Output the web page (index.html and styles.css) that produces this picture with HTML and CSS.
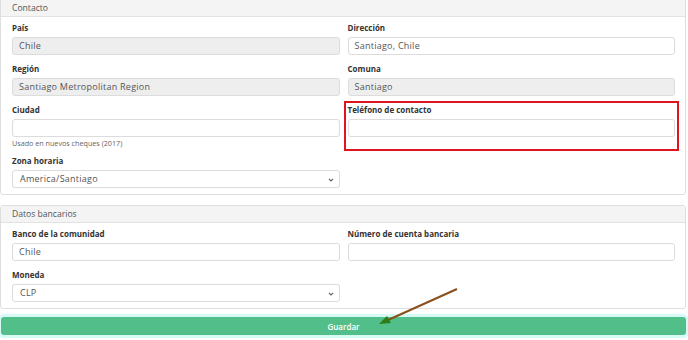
FILE: index.html
```html
<!DOCTYPE html>
<html lang="es">
<head>
<meta charset="utf-8">
<link rel="stylesheet" href="styles.css">
</head>
<body>
<div class="page">
  <section class="card card-top">
    <div class="card-header">Contacto</div>
    <div class="card-body">
      <div class="row">
        <div class="field"><label class="lbl">País</label><div class="inp disabled">Chile</div></div>
        <div class="field"><label class="lbl">Dirección</label><div class="inp">Santiago, Chile</div></div>
      </div>
      <div class="row">
        <div class="field"><label class="lbl">Región</label><div class="inp disabled">Santiago Metropolitan Region</div></div>
        <div class="field"><label class="lbl">Comuna</label><div class="inp disabled">Santiago</div></div>
      </div>
      <div class="row">
        <div class="field"><label class="lbl">Ciudad</label><div class="inp"></div><div class="help">Usado en nuevos cheques (2017)</div></div>
        <div class="field highlight"><label class="lbl">Teléfono de contacto</label><div class="inp"></div><div class="redbox"></div></div>
      </div>
      <div class="row">
        <div class="field"><label class="lbl">Zona horaria</label><div class="inp select">America/Santiago<svg class="chev" width="6" height="4" viewBox="0 0 6 4"><path d="M1 1l2 2 2-2" fill="none" stroke="#666" stroke-width="1.1"/></svg></div></div>
        <div class="field"></div>
      </div>
    </div>
  </section>
  <section class="card">
    <div class="card-header">Datos bancarios</div>
    <div class="card-body">
      <div class="row">
        <div class="field"><label class="lbl">Banco de la comunidad</label><div class="inp">Chile</div></div>
        <div class="field"><label class="lbl">Número de cuenta bancaria</label><div class="inp"></div></div>
      </div>
      <div class="row">
        <div class="field"><label class="lbl">Moneda</label><div class="inp select">CLP<svg class="chev" width="6" height="4" viewBox="0 0 6 4"><path d="M1 1l2 2 2-2" fill="none" stroke="#666" stroke-width="1.1"/></svg></div></div>
        <div class="field"></div>
      </div>
    </div>
  </section>
  <button class="save">Guardar</button>
  <svg class="arrow" width="688" height="340" viewBox="0 0 688 340">
    <line x1="457" y1="289" x2="388" y2="320" stroke="#8b4f1c" stroke-width="2"/>
    <path d="M379 324 L387 316 L391 323 Z" fill="#2f7d16"/>
  </svg>
</div>
</body>
</html>
```

FILE: styles.css
```css
* { box-sizing: border-box; }
html, body { margin: 0; padding: 0; background: #fff; }
body { font-family: "Open Sans", "Liberation Sans", sans-serif; color: #333; }
.page { position: relative; width: 688px; height: 340px; overflow: hidden; padding: 0 2px 0 0; }
.card { border: 1px solid #dedede; border-radius: 3px; background: #fff; margin-top: 10px; }
.card-top { margin-top: -1px; border-top-left-radius: 0; border-top-right-radius: 0; }
.card-header { height: 17px; background: #f4f4f4; border-bottom: 1px solid #e2e2e2; font-size: 8.6px; line-height: 16px; color: #555; padding-left: 11px; }
.card-body { padding: 5px 10px 6px 11px; display: flex; flex-direction: column; gap: 8px; }
.row { display: grid; grid-template-columns: 1fr 1fr; column-gap: 8px; }
.field { position: relative; display: flex; flex-direction: column; }
.lbl { font-size: 8px; font-weight: 700; line-height: 12px; margin-bottom: 3px; color: #333; }
.inp { height: 18px; border: 1px solid #dcdcdc; border-radius: 3px; background: #fff; font-size: 9px; letter-spacing: 0.25px; line-height: 16px; padding-left: 6px; color: #555; position: relative; }
.inp.disabled { background: #eeeeee; }
.select { padding-left: 7px; }
.chev { position: absolute; right: 5px; top: 7px; }
.help { font-size: 7.2px; line-height: 9px; margin-top: 2px; color: #666; margin-bottom: -1px; }
.redbox { position: absolute; left: -4px; right: -4px; top: -3px; bottom: -4px; border: 2px solid #e0141e; }
.save { display: block; width: 685px; margin: 8px 0 0 1px; height: 18px; border: 0; border-radius: 3px; background: #52bf8b; color: #fff; font-family: "Open Sans", "Liberation Sans", sans-serif; font-size: 8px; font-weight: 600; box-shadow: 0 0 0 3px #d6fbf4; padding: 0; }
.arrow { position: absolute; left: 0; top: 0; pointer-events: none; }
```
